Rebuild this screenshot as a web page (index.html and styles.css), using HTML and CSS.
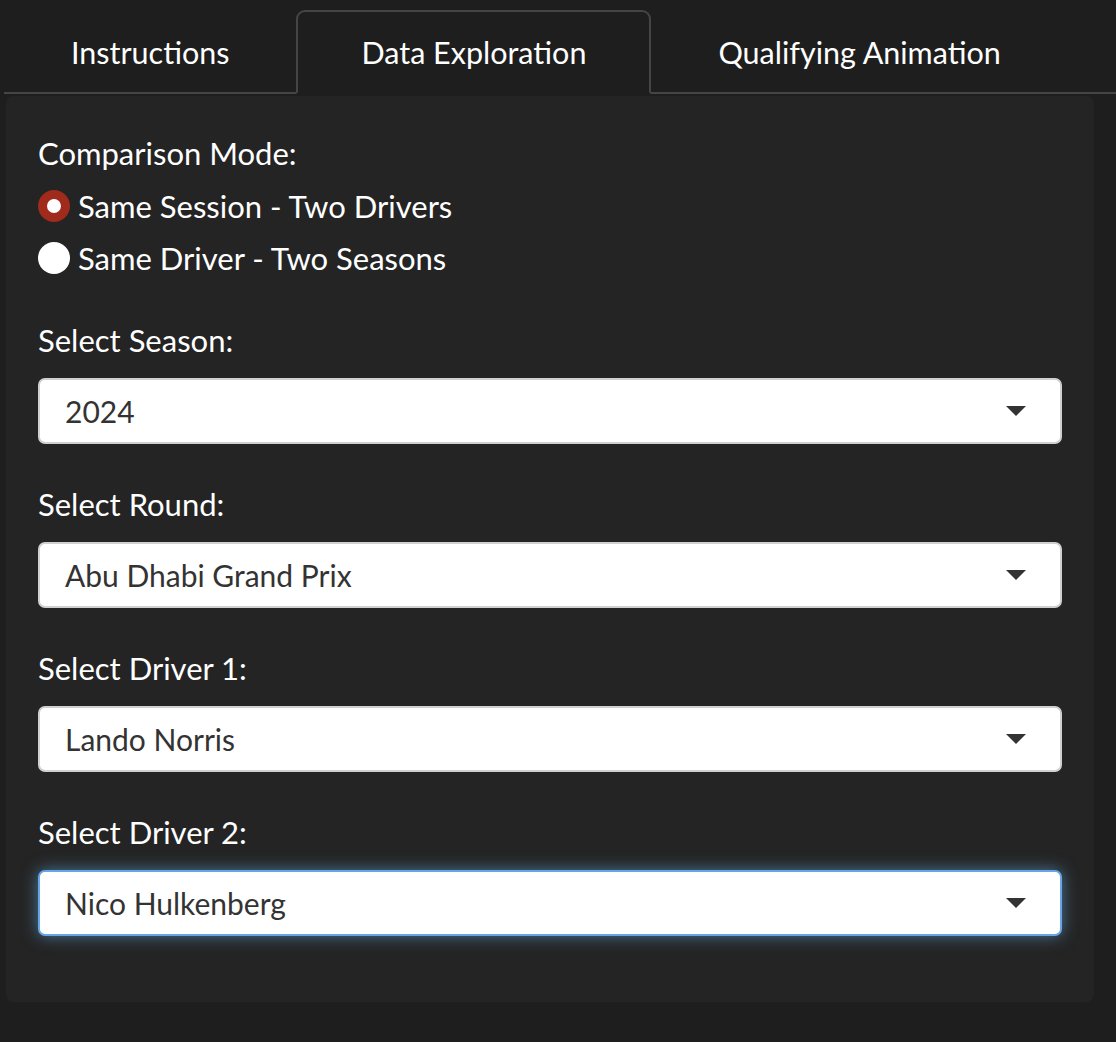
FILE: index.html
```html
<!DOCTYPE html>
<html lang="en">
<head>
<meta charset="utf-8">
<title>Data Exploration</title>
<link rel="stylesheet" href="styles.css">
</head>
<body>
<nav class="tabs">
  <a class="tab">Instructions</a>
  <a class="tab active">Data Exploration</a>
  <a class="tab">Qualifying Animation</a>
  <div class="tab-fill"></div>
</nav>
<main class="panel">
  <div class="group radio-group">
    <div class="label">Comparison Mode:</div>
    <div class="radio-row"><span class="radio checked"></span><span>Same Session - Two Drivers</span></div>
    <div class="radio-row"><span class="radio"></span><span>Same Driver - Two Seasons</span></div>
  </div>
  <div class="group">
    <div class="label">Select Season:</div>
    <div class="select"><span>2024</span><span class="caret"></span></div>
  </div>
  <div class="group">
    <div class="label">Select Round:</div>
    <div class="select"><span>Abu Dhabi Grand Prix</span><span class="caret"></span></div>
  </div>
  <div class="group">
    <div class="label">Select Driver 1:</div>
    <div class="select"><span>Lando Norris</span><span class="caret"></span></div>
  </div>
  <div class="group">
    <div class="label">Select Driver 2:</div>
    <div class="select focus"><span>Nico Hulkenberg</span><span class="caret"></span></div>
  </div>
</main>
</body>
</html>
```
FILE: styles.css
```css
html, body {
  margin: 0;
  padding: 0;
  background: #1e1e1e;
}
body {
  font-family: Lato, "Open Sans", sans-serif;
  font-size: 31px;
  color: #ffffff;
  height: 1042px;
  overflow: hidden;
}
.tabs {
  display: flex;
  align-items: flex-end;
  padding: 10px 0 0 4px;
  font-size: 30.5px;
}
.tab {
  display: flex;
  align-items: center;
  justify-content: center;
  height: 84px;
  padding: 2px 67px 0 67px;
  box-sizing: border-box;
  border-bottom: 2px solid #454545;
  color: #ffffff;
}
.tab.active {
  border: 2px solid #454545;
  border-bottom-color: #1e1e1e;
  border-radius: 9px 9px 0 0;
  padding: 0 63px 0 63px;
}
.tab-fill {
  flex: 1;
  height: 84px;
  border-bottom: 2px solid #454545;
  box-sizing: border-box;
}
.panel {
  margin: 2px 22px 0 6px;
  background: #242424;
  border-radius: 8px;
  padding: 37px 32px 66px 32px;
}
.label {
  height: 40px;
  line-height: 40px;
  margin: 0 0 18px 0;
}
.group {
  margin-bottom: 40px;
}
.group:last-child {
  margin-bottom: 0;
}
.group.radio-group {
  margin-bottom: 36px;
}
.radio-group .label {
  margin-bottom: 7px;
}
.radio-row {
  display: flex;
  align-items: center;
  height: 52px;
  gap: 8px;
}
.radio {
  width: 32px;
  height: 32px;
  border-radius: 50%;
  background: #ffffff;
  box-sizing: border-box;
  flex: none;
}
.radio.checked {
  border: 9px solid #a02a1b;
}
.select {
  display: flex;
  align-items: center;
  justify-content: space-between;
  height: 66px;
  box-sizing: border-box;
  background: #ffffff;
  border: 2px solid #d0d0d0;
  border-radius: 7px;
  padding: 0 34px 0 25px;
  color: #333333;
  font-size: 30px;
}
.select.focus {
  border-color: #66a6e6;
  box-shadow: 0 0 16px rgba(102, 175, 233, 0.6);
}
.caret {
  width: 0;
  height: 0;
  border-left: 10px solid transparent;
  border-right: 10px solid transparent;
  border-top: 10px solid #333333;
}
```
